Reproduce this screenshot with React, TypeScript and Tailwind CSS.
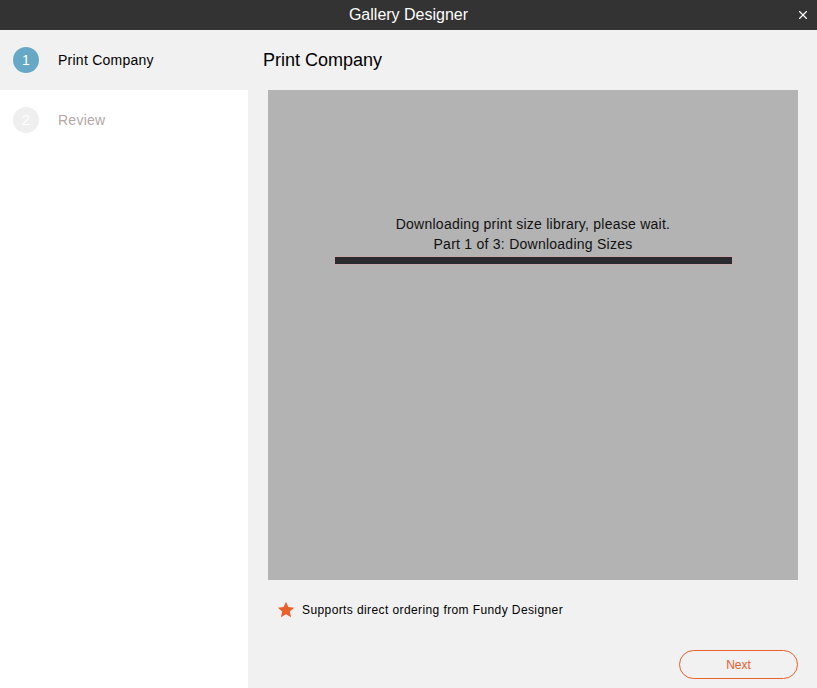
import { X } from 'lucide-react';

const font = { fontFamily: '"Liberation Sans", Arial, sans-serif' };

function Step({ n, label, active }: { n: number; label: string; active?: boolean }) {
  return (
    <div className={`flex h-[60px] items-center pl-[13px] ${active ? 'bg-[#f1f1f1]' : 'bg-white'}`}>
      <div
        className={`flex h-[26px] w-[26px] items-center justify-center rounded-full text-[14px] text-white ${
          active ? 'bg-[#67a8c5]' : 'bg-[#efefef]'
        }`}
      >
        {n}
      </div>
      <span className={`ml-[19px] text-[14px] tracking-[0.25px] ${active ? 'text-black' : 'text-[#b4a8a8]'}`}>
        {label}
      </span>
    </div>
  );
}

export default function App() {
  return (
    <div className="flex h-[688px] w-[817px] flex-col bg-[#f1f1f1]" style={font}>
      <div className="relative flex h-[30px] shrink-0 items-center justify-center bg-[#333333]">
        <span className="text-[16px] text-white">Gallery Designer</span>
        <button className="absolute right-[7px] top-[8px] text-white">
          <X size={14} strokeWidth={2} />
        </button>
      </div>
      <div className="flex flex-1">
        <div className="flex w-[248px] shrink-0 flex-col bg-white">
          <Step n={1} label="Print Company" active />
          <Step n={2} label="Review" />
          <div className="flex-1" />
        </div>
        <div className="flex flex-1 flex-col pl-[15px] pr-[19px]">
          <h1 className="flex h-[60px] items-center text-[18px] text-black">Print Company</h1>
          <div className="ml-[5px] flex h-[490px] flex-col items-center bg-[#b3b3b3] pt-[124px]">
            <p className="text-[14px] leading-[20px] tracking-[0.25px] text-[#111]">
              Downloading print size library, please wait.
            </p>
            <p className="text-[14px] leading-[20px] tracking-[0.25px] text-[#111]">Part 1 of 3: Downloading Sizes</p>
            <div className="mt-[2px] h-[9px] w-[399px] border border-[#c9a9a9] bg-[#2a2b2e]" />
          </div>
          <div className="ml-[13px] mt-[20px] flex items-center">
            <svg width="20" height="20" viewBox="0 0 24 24" className="text-[#e8602c]">
              <path
                fill="currentColor"
                d="M12 2.2l2.9 6.3 6.9.7-5.2 4.6 1.5 6.8L12 17.1l-6.1 3.5 1.5-6.8-5.2-4.6 6.9-.7z"
              />
            </svg>
            <span className="ml-[6px] text-[12px] tracking-[0.4px] text-black">
              Supports direct ordering from Fundy Designer
            </span>
          </div>
          <div className="mt-auto mb-[9px] flex justify-end">
            <button className="h-[29px] w-[119px] rounded-full border border-[#e8602c] text-[12px] text-[#e8602c]">
              Next
            </button>
          </div>
        </div>
      </div>
    </div>
  );
}
